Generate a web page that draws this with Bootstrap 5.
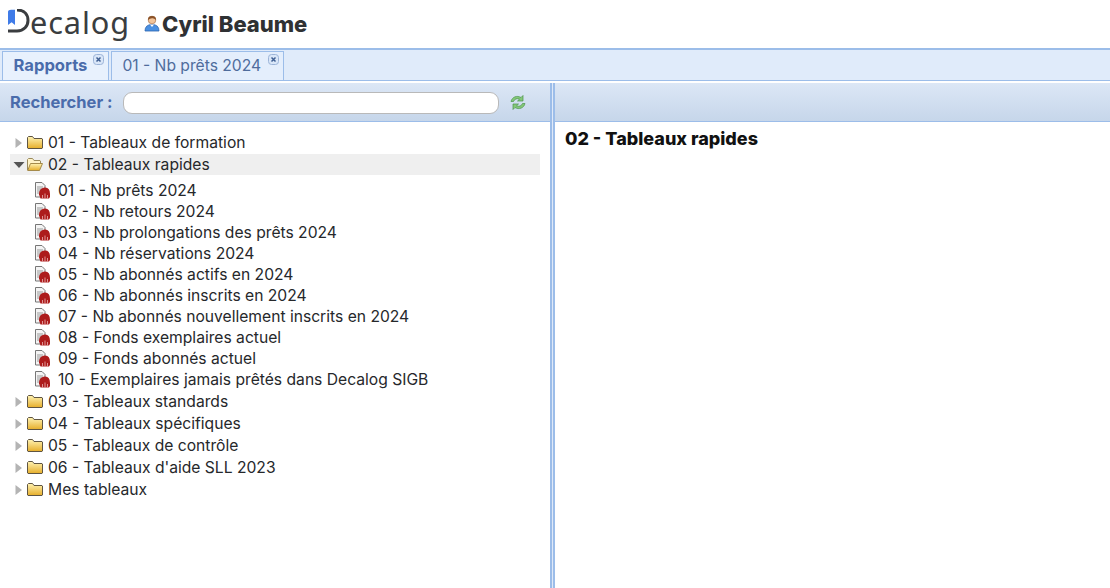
<!DOCTYPE html>
<html lang="fr">
<head>
<meta charset="utf-8">
<title>Decalog</title>
<link href="https://cdn.jsdelivr.net/npm/bootstrap@5.3.0/dist/css/bootstrap.min.css" rel="stylesheet">
<style>
html,body{height:100%;overflow:hidden}
body{font-family:"Inter","Roboto",sans-serif;font-size:15.65px;color:#222;background:#fff}
.app-shell{height:588px}
.top-head{height:48px;padding-left:7px}
.logo-mark{width:23px;height:26px;flex:none;margin-top:-4px}
.logo-word{font-family:"Noto Sans",sans-serif;font-size:30.7px;line-height:1;color:#3a3d40;letter-spacing:.9px;margin-top:-4px}
.user-ico{width:16px;height:17px;margin-left:14px;flex:none;margin-top:-2px}
.user-name{font-family:"Inter",sans-serif;font-weight:800;font-size:22px;color:#2f3133;margin-left:2px}
.tab-band{height:33px;background:#e0ebfa;border-top:2px solid #9cbde9;border-bottom:1px solid #9cbde9;padding:1px 0 0 2px;gap:2px;align-items:stretch}
.tab-item{position:relative;height:29px;background:#e4eefc;border:1px solid #9cbde9;border-bottom:0;padding:0 22px 0 10px;display:flex;align-items:center;color:#4f6c9c;font-size:15.65px}
.tab-item.tab-on{background:#e8f1fd;font-weight:700;font-size:16.6px;color:#4a6cab;padding:0 21px 2px 10.500px}
.tab-x{position:absolute;top:2px;right:4px;width:11px;height:11px}
.split-rule{height:2px;background:#fff}
.work-area{height:505px}
.pane-left{width:550px;flex:none}
.pane-split{width:5px;flex:none;background:#dfe9f8;border-left:2px solid #9cbde9;border-right:2px solid #9cbde9;background-clip:padding-box}
.tool-bar{height:39px;background:linear-gradient(#dce7f6,#c6d6ea);border-bottom:1px solid #9cbde9}
.search-lab{font-weight:700;color:#4a6cab;font-size:16.5px;margin-left:10px;white-space:nowrap}
.search-in{width:376px;height:22px;border:1px solid #b9b9b9;border-radius:9px;background:#fff;margin-left:10px;margin-top:2px}
.sync-ico{width:18px;height:17px;margin-left:10px;flex:none}
.tree-root{padding:10px 0 0 10px;margin:0;list-style:none;width:540px}
.tree-row{height:21px;margin-bottom:1px;display:flex;align-items:center;white-space:nowrap;color:#26282b}
.tree-row.row-sel{background:#efefef}
.arrow-ico{width:12px;height:12px;flex:none;margin-left:3px}
.folder-ico{width:16px;height:15px;flex:none;margin:0 5px 0 2px}
.tree-kids{list-style:none;margin:0;padding:4px 0 1px 24px}
.kid-row{height:21px;display:flex;align-items:center;white-space:nowrap;color:#26282b}
.doc-ico{width:17px;height:19px;flex:none;margin-right:7px}
.detail-title{font-family:"Inter",sans-serif;font-weight:800;font-size:18px;color:#111;padding:3px 0 0 10px}
.right-fill{flex:1 1 auto;min-width:0}
</style>
</head>
<body>
<svg width="0" height="0" class="position-absolute">
<defs>
<linearGradient id="fold" x1="0" y1="0" x2="0" y2="1"><stop offset="0" stop-color="#fff3b4"/><stop offset="1" stop-color="#e6ae2a"/></linearGradient>
<symbol id="s-folder" viewBox="0 0 16 15"><path d="M.5 13V2.500l1-1h4l1.500 2h8l.5.5v9l-.5.5H1z" fill="url(#fold)" stroke="#5f5542"/></symbol>
<symbol id="s-open" viewBox="0 0 16 15"><path d="M.5 13V2.500l1-1h4l1.500 2h6l.5.5v2" fill="#fff3c8" stroke="#9a8a5c"/><path d="M.7 13.500 3.500 6.500h12l-3 7z" fill="url(#fold)" stroke="#a58a4a"/></symbol>
<symbol id="s-doc" viewBox="0 0 17 19"><path d="M1.500 1.500h6.500l3 3v11.500h-9.500z" fill="#f4f4f4" stroke="#777"/><path d="M3 6h6M3 8h5M3 10h4M3 12h2" stroke="#999"/><path d="M5 13.500Q5 7 10.500 6.500T16 13v3l-1 1.500H6.500z" fill="#ad1c1c"/><path d="M8.500 17.500v-3.500M11 17.500v-5M13.500 17.500v-3.500" stroke="#e3a3a3" stroke-width=".9"/></symbol>
<symbol id="s-right" viewBox="0 0 12 12"><path d="M2.500 1 9 6l-6.500 5z" fill="#b4b4b4"/></symbol>
<symbol id="s-down" viewBox="0 0 12 12"><path d="M.5 3h11L6 9z" fill="#555"/></symbol>
<symbol id="s-x" viewBox="0 0 11 11"><rect x=".5" y=".5" width="10" height="10" rx="3" fill="#d9e6f8" stroke="#9cb4d8"/><path d="M3.500 3.500l4 4M7.500 3.500l-4 4" stroke="#3f5f92" stroke-width="1.500"/></symbol>
</defs>
</svg>
<div class="app-shell d-flex flex-column">
  <header class="top-head d-flex align-items-center">
    <svg class="logo-mark" viewBox="0 0 23 26"><path d="M1 2.500Q1 1 4 .8L8 .8V16L4.600 13.200 1 16z" fill="#3f7be8"/><path d="M10 1C18 1 21 6 21 11.500S17 22 10 22H1" fill="none" stroke="#3a3d40" stroke-width="3"/></svg>
    <span class="logo-word">ecalog</span>
    <svg class="user-ico" viewBox="0 0 16 17"><path d="M1 16Q1 9.500 8 9.500T15 16z" fill="#4a90e2" stroke="#2a62ae" stroke-width=".8"/><path d="M6 9.500h4L8 12z" fill="#fff"/><circle cx="8" cy="5" r="3.800" fill="#f2c49a" stroke="#a87048" stroke-width=".7"/><path d="M4 5Q3.800 1 8 1t4 4Q10 3 8 3.300T4 5z" fill="#8a5228"/></svg>
    <span class="user-name">Cyril Beaume</span>
  </header>
  <nav class="tab-band d-flex">
    <div class="tab-item tab-on">Rapports<svg class="tab-x"><use href="#s-x"/></svg></div>
    <div class="tab-item">01 - Nb prêts 2024<svg class="tab-x"><use href="#s-x"/></svg></div>
  </nav>
  <div class="split-rule"></div>
  <div class="work-area d-flex">
    <section class="pane-left">
      <div class="tool-bar d-flex align-items-center">
        <span class="search-lab">Rechercher :</span>
        <div class="search-in"></div>
        <svg class="sync-ico" viewBox="0 0 18 17"><path d="M2 7.500C3 3 8 1 12 3.500L14 1.500V7H8.500L10.500 5.200C8 4 5.500 5 4.500 7.500z" fill="#84c878" stroke="#4b934a" stroke-width=".7"/><path d="M16 9.500C15 14 10 16 6 13.500L4 15.500V10H9.500L7.500 11.800C10 13 12.500 12 13.500 9.500z" fill="#84c878" stroke="#4b934a" stroke-width=".7"/></svg>
      </div>
      <ul class="tree-root">
        <li class="tree-row"><svg class="arrow-ico"><use href="#s-right"/></svg><svg class="folder-ico"><use href="#s-folder"/></svg>01 - Tableaux de formation</li>
        <li class="tree-row row-sel"><svg class="arrow-ico"><use href="#s-down"/></svg><svg class="folder-ico"><use href="#s-open"/></svg>02 - Tableaux rapides</li>
        <li>
          <ul class="tree-kids">
            <li class="kid-row"><svg class="doc-ico"><use href="#s-doc"/></svg>01 - Nb prêts 2024</li>
            <li class="kid-row"><svg class="doc-ico"><use href="#s-doc"/></svg>02 - Nb retours 2024</li>
            <li class="kid-row"><svg class="doc-ico"><use href="#s-doc"/></svg>03 - Nb prolongations des prêts 2024</li>
            <li class="kid-row"><svg class="doc-ico"><use href="#s-doc"/></svg>04 - Nb réservations 2024</li>
            <li class="kid-row"><svg class="doc-ico"><use href="#s-doc"/></svg>05 - Nb abonnés actifs en 2024</li>
            <li class="kid-row"><svg class="doc-ico"><use href="#s-doc"/></svg>06 - Nb abonnés inscrits en 2024</li>
            <li class="kid-row"><svg class="doc-ico"><use href="#s-doc"/></svg>07 - Nb abonnés nouvellement inscrits en 2024</li>
            <li class="kid-row"><svg class="doc-ico"><use href="#s-doc"/></svg>08 - Fonds exemplaires actuel</li>
            <li class="kid-row"><svg class="doc-ico"><use href="#s-doc"/></svg>09 - Fonds abonnés actuel</li>
            <li class="kid-row"><svg class="doc-ico"><use href="#s-doc"/></svg>10 - Exemplaires jamais prêtés dans Decalog SIGB</li>
          </ul>
        </li>
        <li class="tree-row"><svg class="arrow-ico"><use href="#s-right"/></svg><svg class="folder-ico"><use href="#s-folder"/></svg>03 - Tableaux standards</li>
        <li class="tree-row"><svg class="arrow-ico"><use href="#s-right"/></svg><svg class="folder-ico"><use href="#s-folder"/></svg>04 - Tableaux spécifiques</li>
        <li class="tree-row"><svg class="arrow-ico"><use href="#s-right"/></svg><svg class="folder-ico"><use href="#s-folder"/></svg>05 - Tableaux de contrôle</li>
        <li class="tree-row"><svg class="arrow-ico"><use href="#s-right"/></svg><svg class="folder-ico"><use href="#s-folder"/></svg>06 - Tableaux d'aide SLL 2023</li>
        <li class="tree-row"><svg class="arrow-ico"><use href="#s-right"/></svg><svg class="folder-ico"><use href="#s-folder"/></svg>Mes tableaux</li>
      </ul>
    </section>
    <div class="pane-split"></div>
    <section class="right-fill">
      <div class="tool-bar"></div>
      <div class="detail-title">02 - Tableaux rapides</div>
    </section>
  </div>
</div>
<script src="https://cdn.jsdelivr.net/npm/bootstrap@5.3.0/dist/js/bootstrap.bundle.min.js"></script>
</body>
</html>
